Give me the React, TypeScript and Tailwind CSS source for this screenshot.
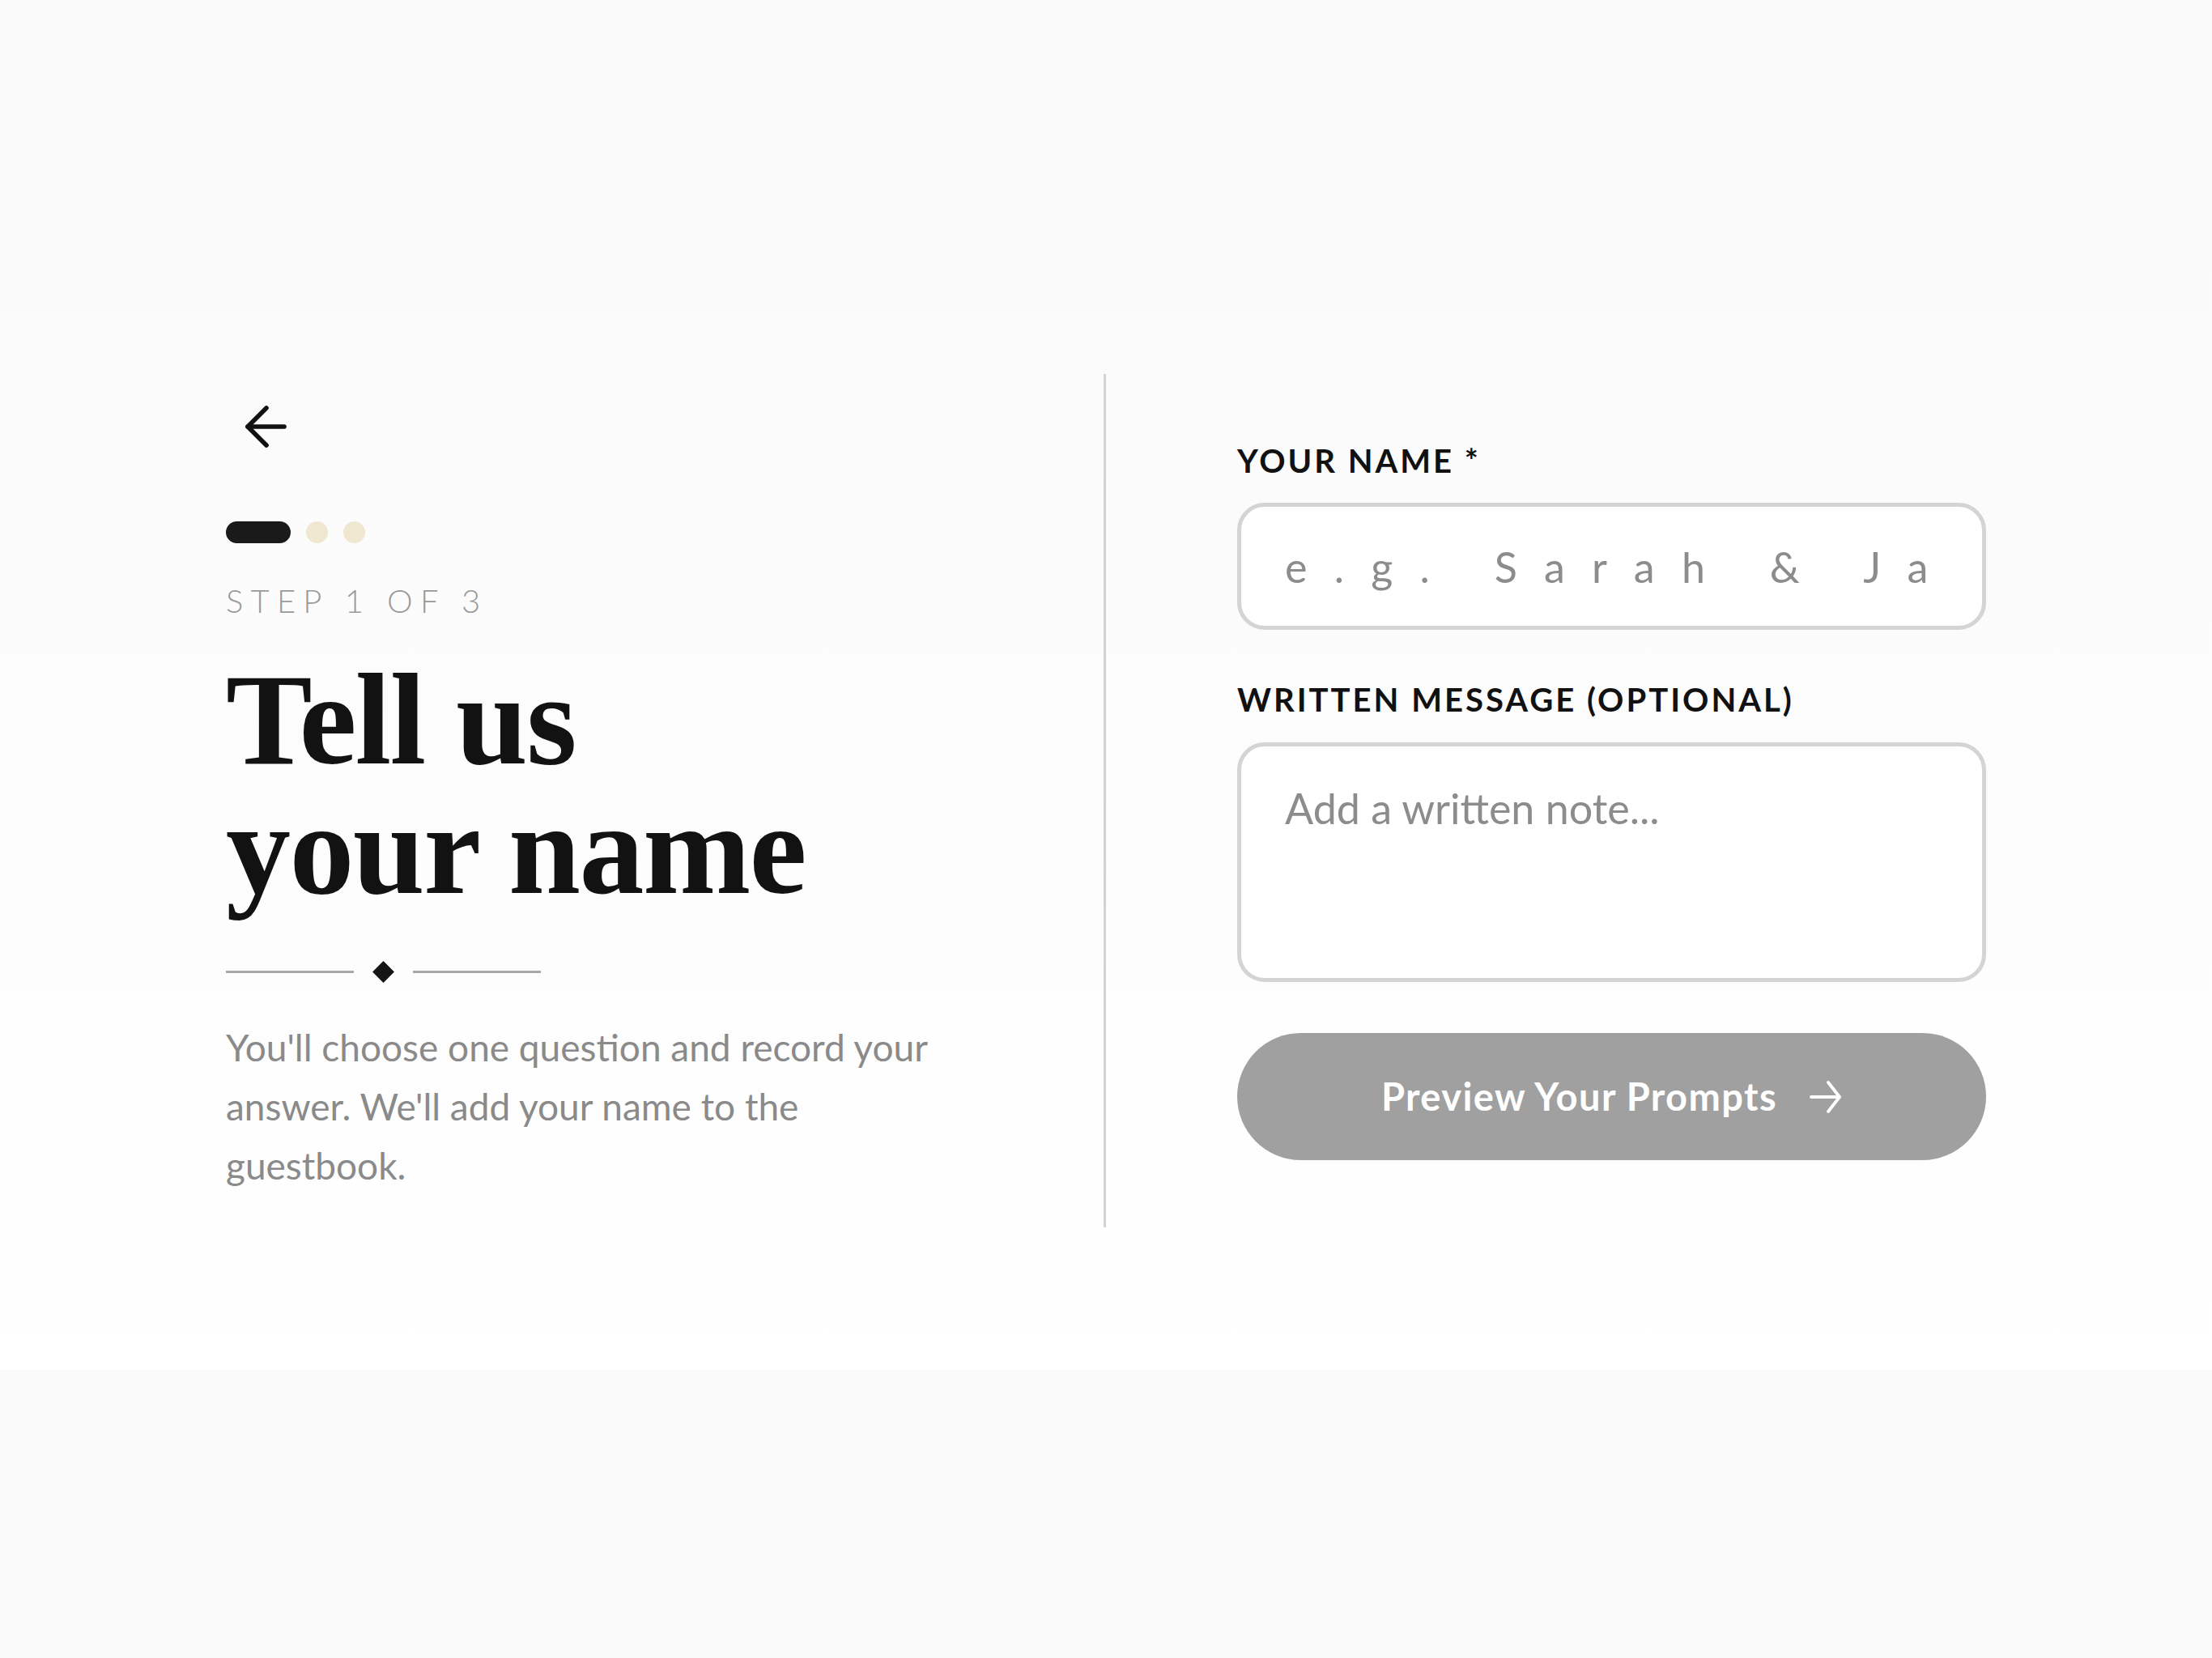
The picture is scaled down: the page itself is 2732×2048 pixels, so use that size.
import React from 'react';

const BackArrow: React.FC = () => (
  <svg width="54" height="54" viewBox="0 0 54 54" fill="none" stroke="#111111" strokeWidth="5.6" strokeLinecap="round" strokeLinejoin="round">
    <path d="M50 27H5" />
    <path d="M28 4 5 27l23 23" />
  </svg>
);

const NextArrow: React.FC = () => (
  <svg width="40" height="40" viewBox="0 0 40 40" fill="none" stroke="#ffffff" strokeWidth="3.8" strokeLinecap="round" strokeLinejoin="round">
    <path d="M2 20h35" />
    <path d="m23 2 14 18-14 18" />
  </svg>
);

export const GuestNamePage: React.FC = () => {
  return (
    <div className="min-h-screen bg-[#fafafa] font-['Lato','Open_Sans',sans-serif]">
      <section className="h-[1692px] bg-linear-to-b from-[#f9f9f9] to-white flex justify-center pt-[462px]">
        <div className="grid grid-cols-[1087px_1087px] items-center self-start">
          {/* left: intro */}
          <div className="flex flex-col py-[40px] pr-[159px] border-r-[3px] border-[#d2d2d2]">
            <button type="button" className="w-[54px] h-[54px] ml-[22px] -mt-[2px]">
              <BackArrow />
            </button>

            <div className="flex items-center gap-[19px] mt-[90px]">
              <span className="w-[80px] h-[27px] rounded-full bg-[#1a1a1a]" />
              <span className="w-[27px] h-[27px] rounded-full bg-[#f0e7d1]" />
              <span className="w-[27px] h-[27px] rounded-full bg-[#f0e7d1]" />
            </div>

            <p className="mt-[47px] text-[40px] leading-[48px] tracking-[0.23em] text-[#9a9a9a] font-light">
              STEP 1 OF 3
            </p>

            <h1 className="mt-[43px] font-['Liberation_Serif','Times_New_Roman',serif] font-bold text-[160px] leading-[160px] tracking-[-0.01em] text-[#121212]">
              Tell us
              <br />
              your name
            </h1>

            <div className="flex items-center gap-[27px] mt-[57px] h-[28px]">
              <span className="w-[158px] h-[3px] bg-[#a8a8a8]" />
              <span className="w-[19px] h-[19px] rotate-45 bg-[#151515]" />
              <span className="w-[158px] h-[3px] bg-[#a8a8a8]" />
            </div>

            <p className="mt-[43px] text-[46px] leading-[73px] text-[#8a8a8a]">
              You'll choose one question and record your answer. We'll add your name to the guestbook.
            </p>
          </div>

          {/* right: form */}
          <form className="flex flex-col pl-[162px]">
            <label className="text-[40px] leading-[48px] font-bold tracking-[0.075em] text-[#111]">
              YOUR NAME *
            </label>
            <input
              type="text"
              placeholder="e.g. Sarah & James"
              className="mt-[28px] w-full h-[157px] rounded-[34px] border-[5px] border-[#d4d4d4] bg-white px-[54px] text-[52px] tracking-[0.64em] text-[#333] placeholder:text-[#8c8c8c] outline-none"
            />

            <label className="mt-[62px] text-[40px] leading-[48px] font-bold tracking-[0.075em] text-[#111]">
              WRITTEN MESSAGE (OPTIONAL)
            </label>
            <textarea
              placeholder="Add a written note..."
              className="mt-[29px] w-full h-[296px] resize-none rounded-[34px] border-[5px] border-[#d4d4d4] bg-white px-[54px] pt-[45px] text-[52px] leading-[1.2] text-[#333] placeholder:text-[#8c8c8c] outline-none"
            />

            <button
              type="button"
              className="mt-[63px] w-full h-[157px] rounded-full bg-[#a0a0a0] flex items-center justify-center gap-[40px] text-white text-[47px] font-bold tracking-[0.03em]"
            >
              <span>Preview Your Prompts</span>
              <NextArrow />
            </button>
          </form>
        </div>
      </section>
    </div>
  );
};

export default GuestNamePage;
